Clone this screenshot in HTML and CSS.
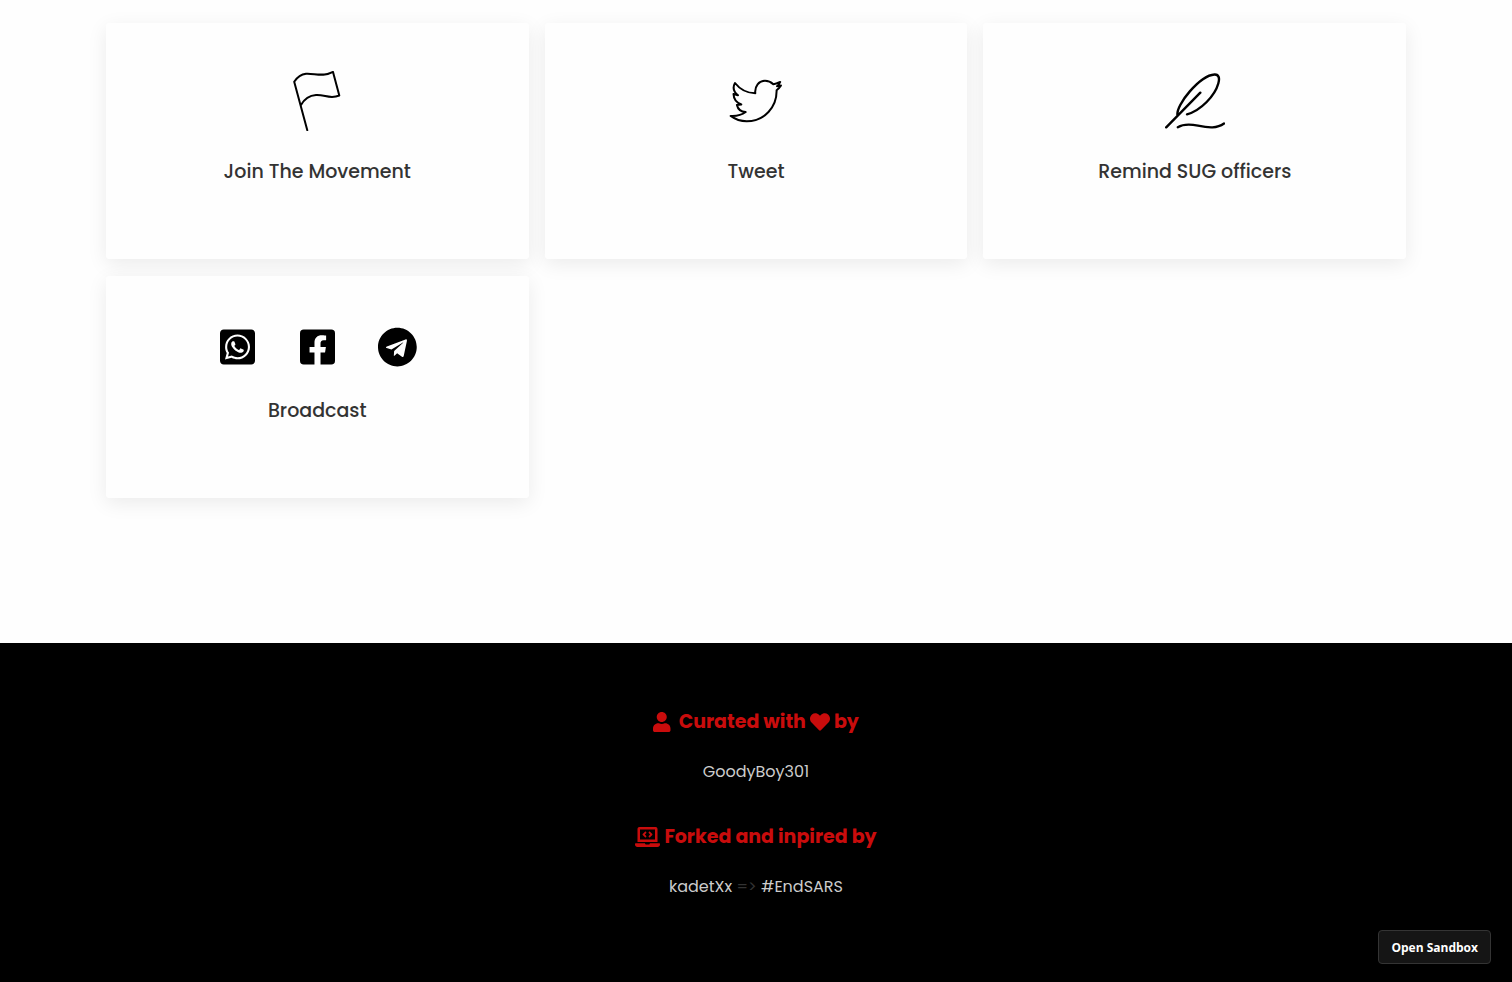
FILE: index.html
```html
<!DOCTYPE html>
<html lang="en">
<head>
<meta charset="utf-8">
<meta name="viewport" content="width=device-width, initial-scale=1">
<title>Join The Movement</title>
<link rel="stylesheet" href="styles.css">
</head>
<body>
<main class="actions">
  <a class="card" href="#join">
    <svg class="card-icon" viewBox="0 0 60 60" aria-hidden="true"><path d="M20.300 59.200L7.200 10.700C10 6.500 14 3.200 19 2.700C27 2 36 6.500 46 .9L52.300 24.500C43 28.500 38 23.500 29 24C22 24.500 17 28.500 13.800 34.200"/></svg>
    <h3 class="card-title">Join The Movement</h3>
  </a>
  <a class="card" href="#tweet">
    <svg class="card-icon" viewBox="0 0 60 60" aria-hidden="true"><path d="M9 12C14 18.500 21 22 29.300 22.300C28.500 15 33 9.700 39 9.700C42.500 9.700 45 11 47.300 13.200C49.800 13 52 12 54.200 11C53.500 12.800 52.500 14 51 15.200L55 14.600C53.800 16.600 52.300 18 50.600 19.200C51 36 38.500 50.300 20.700 50.300C14.500 50.300 9.500 48.500 4.700 44.900C10.500 45.200 15.500 44.200 19.700 41C15 40.800 12 38.500 10.900 33.900L15.300 33.400C10.500 31.700 7.700 28 7.500 23L12 24.300C7.800 21 6.500 16.500 9 12Z"/></svg>
    <h3 class="card-title">Tweet</h3>
  </a>
  <a class="card" href="#remind">
    <svg class="card-icon card-icon-bold" viewBox="0 0 60 60" aria-hidden="true"><path d="M1.200 56.300L35.300 21.700M12.500 44.300C10.500 34 35 4.500 49.500 3.500C54 3.200 54.800 7.500 53.300 12.500C50 24.500 36 39.500 22 43.300M12.800 56.200C19 52.500 25 53 33 54.700C44 57 52 57.500 59 52.500"/></svg>
    <h3 class="card-title">Remind SUG officers</h3>
  </a>
  <section class="card">
    <div class="share">
      <a class="share-link" href="#whatsapp" aria-label="WhatsApp"><svg class="share-icon" viewBox="0 0 448 512"><path d="M224 122.8c-72.7 0-131.8 59.1-131.9 131.8 0 24.9 7 49.2 20.2 70.1l3.1 5-13.3 48.6 49.9-13.1 4.8 2.9c20.2 12 43.4 18.4 67.1 18.4h.1c72.6 0 133.3-59.1 133.3-131.8 0-35.2-15.2-68.3-40.1-93.2-25-25-58-38.7-93.2-38.7zm77.500 188.400c-3.300 9.300-19.100 17.700-26.700 18.800-12.600 1.900-22.400.9-47.500-9.900-39.700-17.200-65.700-57.200-67.700-59.800-2-2.600-16.200-21.500-16.200-41s10.200-29.100 13.900-33.100c3.600-4 7.900-5 10.600-5 2.600 0 5.300 0 7.600.1 2.400.1 5.700-.9 8.900 6.800 3.300 7.900 11.200 27.400 12.200 29.400s1.700 4.300.3 6.900c-7.600 15.200-15.700 14.600-11.600 21.600 15.300 26.300 30.600 35.400 53.900 47.100 4 2 6.300 1.700 8.600-1 2.300-2.600 9.900-11.600 12.500-15.500 2.600-4 5.300-3.300 8.900-2 3.600 1.300 23.100 10.900 27.100 12.900s6.600 3 7.600 4.600c.9 1.900.9 9.900-2.400 19.100zM400 32H48C21.500 32 0 53.500 0 80v352c0 26.500 21.500 48 48 48h352c26.500 0 48-21.500 48-48V80c0-26.500-21.500-48-48-48zM223.900 413.200c-26.600 0-52.700-6.700-75.800-19.300L64 416l22.500-82.200c-13.900-24-21.200-51.300-21.200-79.300C65.400 167.100 136.500 96 223.900 96c42.400 0 82.200 16.500 112.200 46.500 29.900 30 47.900 69.800 47.900 112.200 0 87.400-72.700 158.500-160.100 158.500z"/></svg></a>
      <a class="share-link" href="#facebook" aria-label="Facebook"><svg class="share-icon" viewBox="0 0 448 512"><path d="M400 32H48A48 48 0 0 0 0 80v352a48 48 0 0 0 48 48h137.250V327.690h-63V256h63v-54.640c0-62.150 37-96.480 93.670-96.480 27.140 0 55.520 4.840 55.520 4.840v61h-31.270c-30.810 0-40.420 19.120-40.420 38.730V256h68.780l-11 71.690h-57.780V480H400a48 48 0 0 0 48-48V80a48 48 0 0 0-48-48z"/></svg></a>
      <a class="share-link" href="#telegram" aria-label="Telegram"><svg class="share-icon" viewBox="0 0 496 512"><path d="M248 8C111 8 0 119 0 256s111 248 248 248 248-111 248-248S385 8 248 8zm121.800 169.900l-40.700 191.800c-3 13.600-11.100 16.900-22.400 10.500l-62-45.700-29.900 28.800c-3.300 3.300-6.100 6.100-12.500 6.100l4.400-63.100 114.900-103.800c5-4.400-1.100-6.900-7.700-2.500l-142 89.400-61.200-19.100c-13.300-4.200-13.600-13.300 2.800-19.700l239.100-92.200c11.100-4 20.800 2.700 17.200 19.500z"/></svg></a>
    </div>
    <h3 class="card-title">Broadcast</h3>
  </section>
</main>
<footer class="footer">
  <h3 class="footer-title">
    <svg class="title-icon title-icon-user" viewBox="0 0 448 512" aria-hidden="true"><path d="M224 256c70.700 0 128-57.300 128-128S294.700 0 224 0 96 57.300 96 128s57.300 128 128 128zm89.600 32h-16.700c-22.200 10.200-46.900 16-72.900 16s-50.600-5.800-72.900-16h-16.700C60.200 288 0 348.200 0 422.400V464c0 26.500 21.500 48 48 48h352c26.500 0 48-21.500 48-48v-41.600c0-74.200-60.200-134.400-134.400-134.400z"/></svg>
    <span>Curated with</span>
    <svg class="title-icon" viewBox="0 0 512 512" role="img" aria-label="love"><path d="M462.300 62.600C407.500 15.900 326 24.300 275.700 76.200L256 96.500l-19.700-20.300C186.100 24.300 104.500 15.900 49.700 62.600c-62.800 53.600-66.100 149.800-9.900 207.900l193.500 199.800c12.500 12.900 32.800 12.900 45.300 0l193.500-199.800c56.300-58.100 53-154.300-9.800-207.900z"/></svg>
    <span>by</span>
  </h3>
  <p class="credit"><a class="credit-link" href="#goodyboy301">GoodyBoy301</a></p>
  <h3 class="footer-title">
    <svg class="title-icon" viewBox="0 0 640 512" aria-hidden="true"><path d="M255.030 261.650c6.250 6.250 16.380 6.250 22.630 0l11.310-11.310c6.250-6.250 6.250-16.380 0-22.630L253.250 192l35.710-35.720c6.250-6.250 6.250-16.380 0-22.630l-11.310-11.310c-6.250-6.250-16.380-6.250-22.630 0l-58.340 58.340c-6.250 6.250-6.250 16.380 0 22.630l58.350 58.340zm96.010-11.300l11.310 11.310c6.250 6.250 16.380 6.250 22.630 0l58.340-58.340c6.250-6.250 6.250-16.380 0-22.630l-58.340-58.340c-6.250-6.250-16.380-6.250-22.630 0l-11.310 11.310c-6.250 6.250-6.250 16.380 0 22.630L386.750 192l-35.710 35.720c-6.250 6.250-6.250 16.380 0 22.630zM624 416H381.540c-.74 19.810-14.710 32-32.740 32H288c-18.690 0-33.020-17.470-32.770-32H16c-8.800 0-16 7.200-16 16v16c0 35.200 28.800 64 64 64h512c35.200 0 64-28.800 64-64v-16c0-8.800-7.200-16-16-16zM576 48c0-26.400-21.600-48-48-48H112C85.600 0 64 21.600 64 48v336h512V48zm-64 272H128V64h384v256z"/></svg>
    <span>Forked and inpired by</span>
  </h3>
  <p class="credit"><a class="credit-link" href="#kadetxx">kadetXx</a> =&gt; <a class="credit-link" href="#endsars">#EndSARS</a></p>
</footer>
<button class="sandbox-button" type="button">Open Sandbox</button>
</body>
</html>
```

FILE: styles.css
```css
* {
  box-sizing: border-box;
  margin: 0;
  padding: 0;
}

body {
  display: flex;
  flex-direction: column;
  min-height: 100vh;
  background: #fefefe;
  font-family: Poppins, Inter, sans-serif;
  font-size: 16px;
  line-height: 30px;
}

a {
  color: inherit;
  text-decoration: none;
}

.actions {
  display: grid;
  grid-template-columns: repeat(auto-fill, minmax(320px, 1fr));
  gap: 17px 16px;
  padding: 23px 7% 145px;
}

.card {
  display: flex;
  flex-direction: column;
  align-items: center;
  gap: 24px;
  padding: 48px 24px 70px;
  background: #fefefe;
  border-radius: 3px;
  box-shadow: 0 5px 20px rgba(0, 0, 0, 0.08);
}

.card-icon {
  width: 60px;
  height: 60px;
  fill: none;
  stroke: #000;
  stroke-width: 2;
  stroke-linecap: round;
  stroke-linejoin: round;
}

.card-icon-bold {
  stroke-width: 2.4;
}

.card-title {
  color: #333;
  font-size: 19px;
  font-weight: 500;
  line-height: 34px;
  text-align: center;
}

.share {
  display: flex;
  gap: 40px;
}

.share-link {
  display: flex;
  align-items: center;
  justify-content: center;
  width: 40px;
  height: 46px;
}

.share-icon {
  height: 40px;
  fill: #000;
}

.footer {
  display: flex;
  flex: 1;
  flex-direction: column;
  align-items: center;
  gap: 20px;
  padding: 64px 24px 80px;
  background: #000;
  color: #333;
}

.footer-title {
  display: flex;
  align-items: center;
  gap: 4px;
  color: #c90c0c;
  font-size: 19px;
  font-weight: 700;
}

.title-icon {
  height: 20px;
  fill: currentColor;
}

.title-icon-user {
  margin-right: 4px;
}

.credit + .footer-title {
  margin-top: 15px;
}

.credit-link {
  color: #ccc;
}

.sandbox-button {
  position: fixed;
  right: 21px;
  bottom: 18px;
  padding: 9px 12px 7px;
  background: #151515;
  border: 1px solid #343434;
  border-radius: 4px;
  color: #fff;
  font-family: "Open Sans", sans-serif;
  font-size: 12px;
  font-weight: 700;
  line-height: 16px;
}
```
